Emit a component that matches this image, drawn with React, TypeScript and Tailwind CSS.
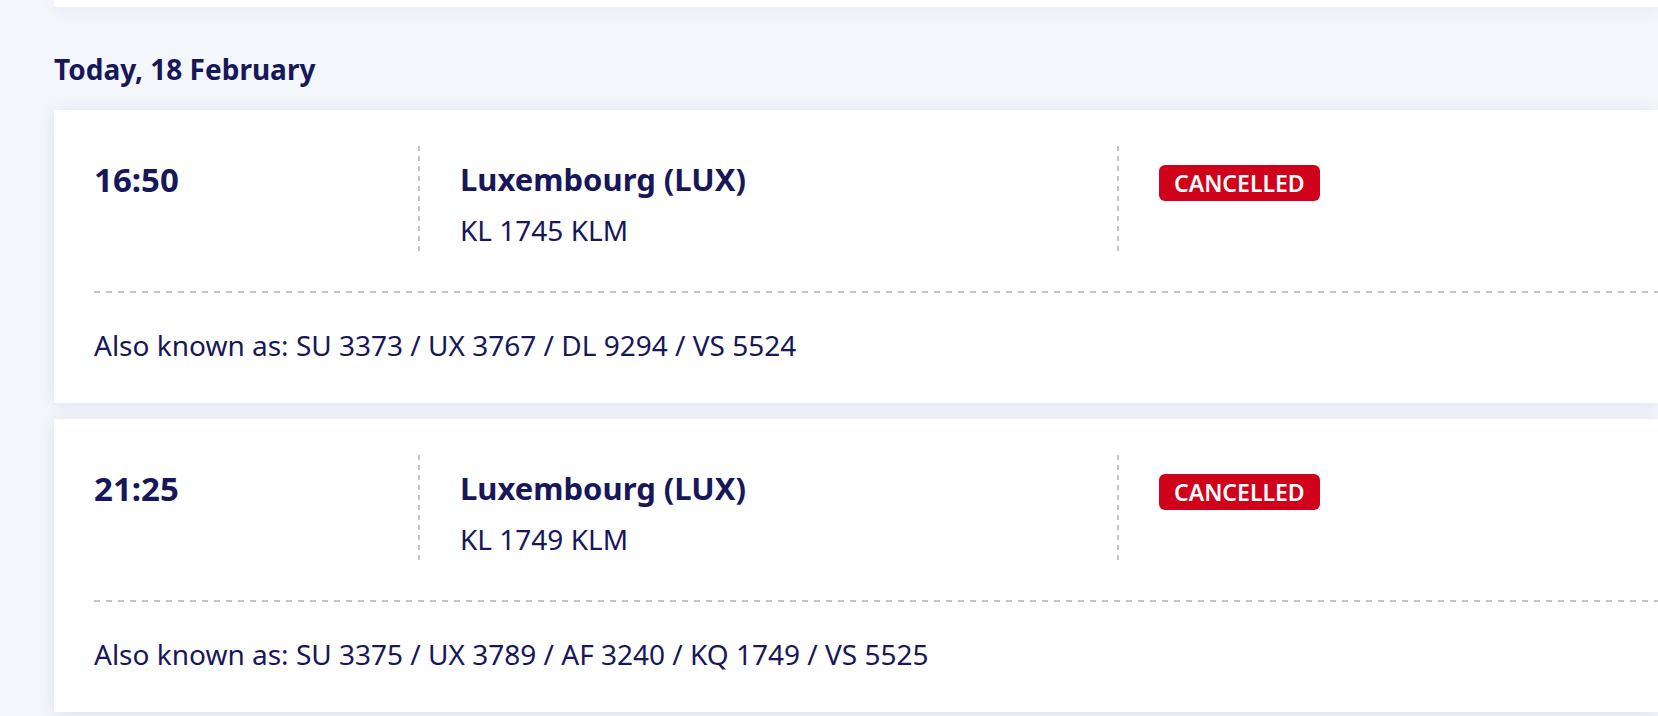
import React from 'react'

interface Flight {
  time: string
  destination: string
  flightNumber: string
  status: string
  codeshares: string[]
}

const flights: Flight[] = [
  {
    time: '16:50',
    destination: 'Luxembourg (LUX)',
    flightNumber: 'KL 1745 KLM',
    status: 'CANCELLED',
    codeshares: ['SU 3373', 'UX 3767', 'DL 9294', 'VS 5524'],
  },
  {
    time: '21:25',
    destination: 'Luxembourg (LUX)',
    flightNumber: 'KL 1749 KLM',
    status: 'CANCELLED',
    codeshares: ['SU 3375', 'UX 3789', 'AF 3240', 'KQ 1749', 'VS 5525'],
  },
]

function VDivider() {
  return (
    <div className="w-[2px] shrink-0 self-stretch bg-[linear-gradient(to_bottom,#c3c4c9_50%,transparent_50%)] bg-[length:2px_10px] bg-repeat-y" />
  )
}

function FlightCard({ flight }: { flight: Flight }) {
  return (
    <div className="bg-white pl-[40px] pt-[36px] pb-[38px] shadow-[0_2px_16px_rgba(20,30,80,0.09)]">
      {/* Main row */}
      <div className="flex h-[105px]">
        <div className="w-[324px] shrink-0 pt-[14px]">
          <span className="text-[33px] leading-[40px] font-bold">{flight.time}</span>
        </div>
        <VDivider />
        <div className="w-[697px] shrink-0 pl-[40px] pt-[13px]">
          <div className="text-[31px] leading-[40px] font-bold">{flight.destination}</div>
          <div className="mt-[11px] text-[28px] leading-[40px]">{flight.flightNumber}</div>
        </div>
        <VDivider />
        <div className="pl-[40px] pt-[19px]">
          <span className="inline-flex h-[36px] items-center rounded-[6px] bg-[#d0021b] px-[15px] text-[23px] leading-none font-semibold text-white">
            {flight.status}
          </span>
        </div>
      </div>

      {/* Separator */}
      <div className="mt-[40px] h-[2px] bg-[linear-gradient(to_right,#c3c4c9_50%,transparent_50%)] bg-[length:12px_2px] bg-repeat-x" />

      {/* Codeshares */}
      <div className="pt-[32px] text-[28px] leading-[40px]">
        Also known as: {flight.codeshares.join(' / ')}
      </div>
    </div>
  )
}

export default function App() {
  return (
    <div
      className="min-h-screen overflow-hidden bg-[#f3f6fb] pl-[54px] text-[#17175a]"
      style={{ fontFamily: '"Noto Sans", "Open Sans", sans-serif' }}
    >
      {/* bottom edge of previous card */}
      <div className="h-[7px] bg-white shadow-[0_2px_16px_rgba(20,30,80,0.09)]" />

      <h2 className="mt-[45px] mb-[24px] text-[28px] leading-[34px] font-bold">Today, 18 February</h2>

      <div className="flex flex-col gap-[16px]">
        {flights.map((f) => (
          <FlightCard key={f.time} flight={f} />
        ))}
      </div>
    </div>
  )
}
